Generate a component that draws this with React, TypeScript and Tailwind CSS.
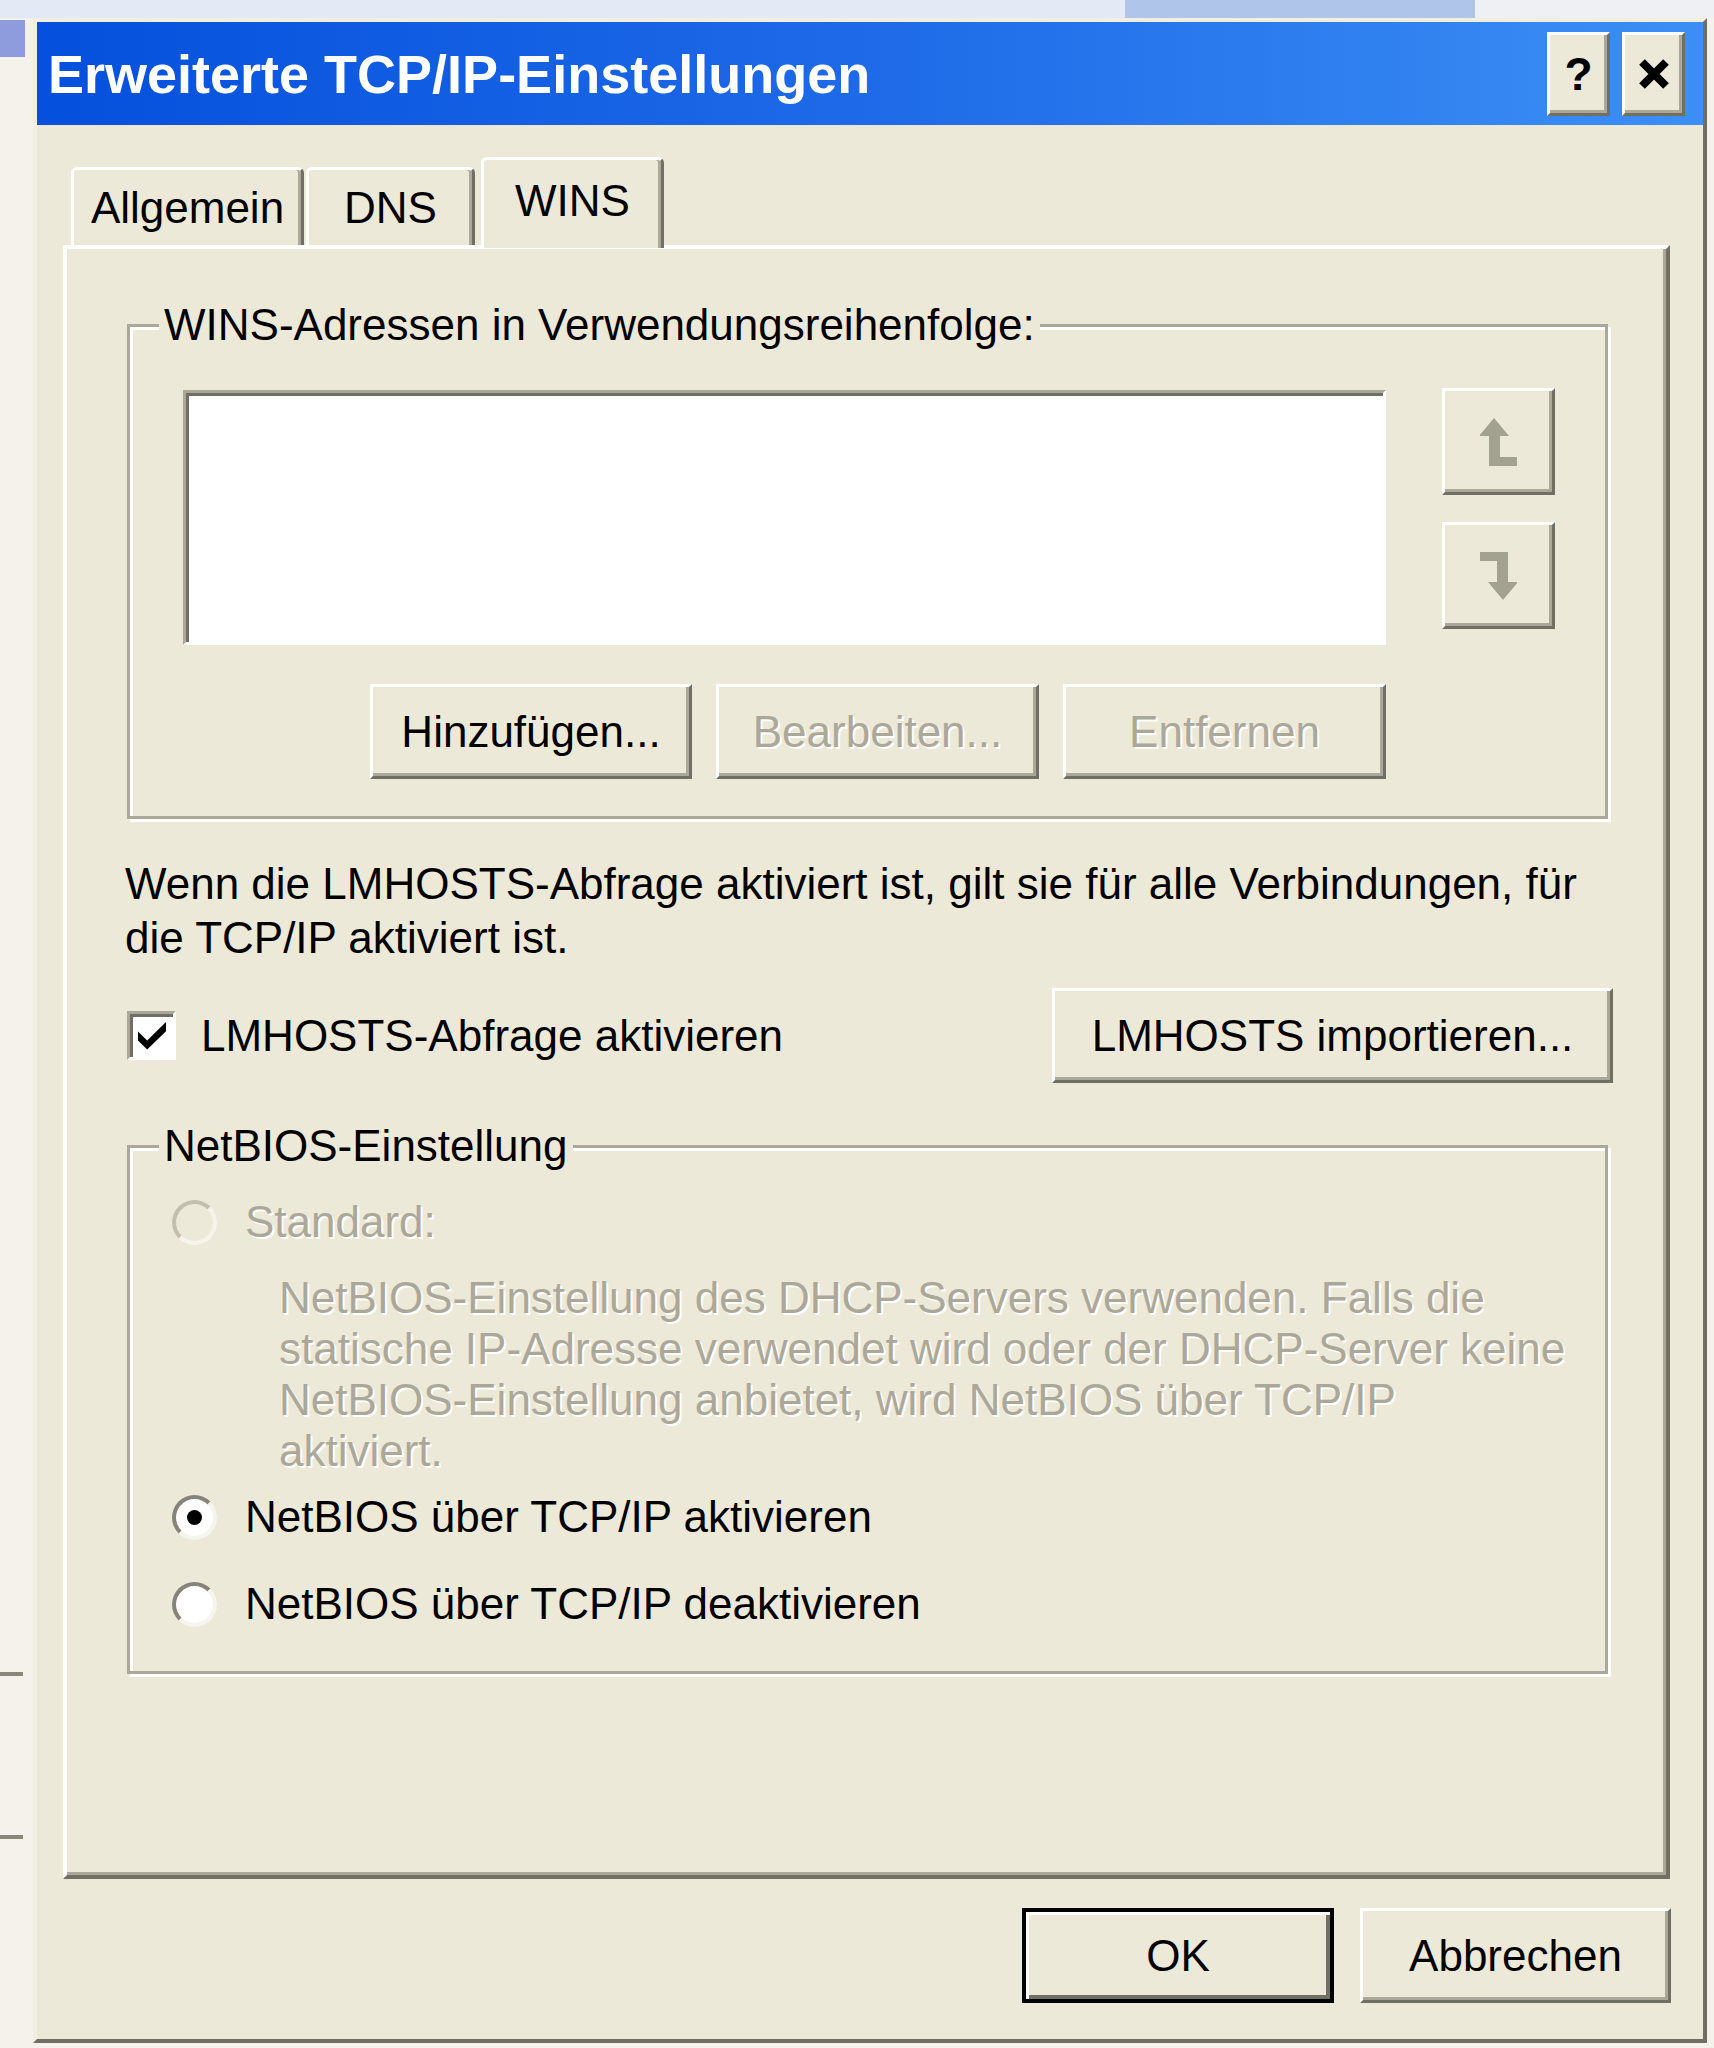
import React from "react";

const FACE = "bg-[#ECE9D8]";
const RAISED =
  "border-[3px] border-t-white border-l-white border-r-[#716F64] border-b-[#716F64] shadow-[inset_-3px_-3px_0_#ACA899]";
const DISABLED_TEXT = "text-[#ACA899] [text-shadow:2px_2px_0_#ffffff]";

function XpButton({
  label,
  disabled,
  isDefault,
  className = "",
}: {
  label: string;
  disabled?: boolean;
  isDefault?: boolean;
  className?: string;
}) {
  const frame = isDefault
    ? "border-[4px] border-black shadow-[inset_3px_3px_0_#ffffff,inset_-4px_-4px_0_#716F64]"
    : RAISED;
  return (
    <div
      className={`flex h-[95px] items-center justify-center ${FACE} ${frame} text-[44px] leading-none ${
        disabled ? DISABLED_TEXT : "text-black"
      } ${className}`}
    >
      {label}
    </div>
  );
}

function GroupBox({
  title,
  className = "",
  children,
}: {
  title: string;
  className?: string;
  children: React.ReactNode;
}) {
  return (
    <div
      className={`relative border-[3px] border-[#ACA899] shadow-[inset_3px_3px_0_#ffffff,3px_3px_0_#ffffff] ${className}`}
    >
      <span className="absolute -top-[29px] left-[29px] whitespace-nowrap bg-[#ECE9D8] px-[5px] text-[44px] leading-[54px] text-black">
        {title}
      </span>
      {children}
    </div>
  );
}

function MoveArrow({ down }: { down?: boolean }) {
  return (
    <svg
      width="37"
      height="48"
      viewBox="0 0 37 48"
      className={down ? "rotate-180" : ""}
    >
      <polygon
        points="14,0 29,18 20,18 20,39 37,39 37,48 9,48 9,18 -1,18"
        fill="#A3A18F"
      />
    </svg>
  );
}

function Radio({
  label,
  checked,
  disabled,
}: {
  label: string;
  checked?: boolean;
  disabled?: boolean;
}) {
  return (
    <div className="flex h-[54px] items-center">
      <span
        className={
          disabled
            ? "flex h-[45px] w-[45px] items-center justify-center rounded-full border-[4px] border-t-[#C3BFAF] border-l-[#C3BFAF] border-b-[#F6F4EC] border-r-[#F6F4EC] bg-[#ECE9D8]"
            : "flex h-[45px] w-[45px] items-center justify-center rounded-full border-[4px] border-t-[#85837A] border-l-[#85837A] border-b-[#F6F4EC] border-r-[#F6F4EC] bg-white"
        }
      >
        {checked && <span className="h-[15px] w-[15px] rounded-full bg-black" />}
      </span>
      <span
        className={`ml-[28px] whitespace-nowrap text-[44px] leading-[54px] ${
          disabled ? DISABLED_TEXT : "text-black"
        }`}
      >
        {label}
      </span>
    </div>
  );
}

function Tab({ label, width, active }: { label: string; width: string; active?: boolean }) {
  return (
    <div
      className={
        active
          ? `relative z-10 flex h-[91px] items-center justify-center rounded-t-[6px] border-l-[3px] border-t-[3px] border-r-[3px] border-l-white border-t-white border-r-[#716F64] pb-[6px] ${FACE} shadow-[inset_-3px_0_0_#ACA899] ${width}`
          : `mb-[3px] flex h-[78px] items-center justify-center rounded-t-[6px] border-l-[3px] border-t-[3px] border-r-[3px] border-l-white border-t-white border-r-[#716F64] ${FACE} shadow-[inset_-3px_0_0_#ACA899] ${width}`
      }
    >
      <span className="text-[44px] leading-none text-black">{label}</span>
    </div>
  );
}

export default function App() {
  return (
    <div className="relative h-[2048px] w-[1714px] overflow-hidden bg-[#F4F2EA] font-['Liberation_Sans',Arial,sans-serif]">
      {/* hintergrund oben */}
      <div className="flex h-[18px] w-full">
        <div className="h-full w-[1125px] bg-[#E3E9F5]" />
        <div className="h-full w-[350px] bg-[#AFC6EA]" />
        <div className="h-full flex-1 bg-[#EEF0F4]" />
      </div>

      <div className="flex">
        {/* linker rand */}
        <div className="flex w-[33px] flex-col">
          <div className="mt-[2px] h-[37px] w-[25px] bg-[#8E9CDD]" />
          <div className="mt-[1615px] h-[4px] w-[23px] bg-[#8A887C]" />
          <div className="mt-[159px] h-[4px] w-[23px] bg-[#8A887C]" />
        </div>

        {/* dialog */}
        <div className="flex h-[2025px] w-[1674px] flex-col border-[4px] border-t-[#F1EFE2] border-l-[#F1EFE2] border-r-[#716F64] border-b-[#716F64] bg-[#ECE9D8]">
          <div className="flex h-[103px] items-center justify-between bg-linear-to-r from-[#0550DC] via-[#1E6AE8] to-[#3C8FF5] pl-[11px] pr-[18px]">
            <span className="whitespace-nowrap text-[54px] font-bold leading-none text-white">
              Erweiterte TCP/IP-Einstellungen
            </span>
            <div className="flex gap-[12px]">
              <div className={`flex h-[84px] w-[63px] items-center justify-center ${FACE} ${RAISED}`}>
                <span className="text-[46px] font-bold leading-none text-black">?</span>
              </div>
              <div className={`flex h-[84px] w-[63px] items-center justify-center ${FACE} ${RAISED}`}>
                <svg width="32" height="32" viewBox="0 0 32 32">
                  <path d="M4 4 L28 28 M28 4 L4 28" stroke="#000" strokeWidth="8" />
                </svg>
              </div>
            </div>
          </div>

          {/* reiter */}
          <div className="mt-[32px] flex items-end pl-[34px]">
            <Tab label="Allgemein" width="w-[233px]" />
            <div className="w-[2px]" />
            <Tab label="DNS" width="w-[169px]" />
            <div className="w-[6px]" />
            <Tab label="WINS" width="w-[183px]" active />
          </div>

          <div className="ml-[26px] -mt-[3px] h-[1634px] w-[1607px] border-[4px] border-t-white border-l-white border-r-[#716F64] border-b-[#716F64] pl-[60px] pt-[75px] shadow-[inset_-3px_-3px_0_#ACA899]">
            <GroupBox title="WINS-Adressen in Verwendungsreihenfolge:" className="w-[1481px] pb-[37px] pl-[53px] pt-[63px]">
              <div className="flex items-start gap-[56px]">
                <div className="flex w-[1203px] flex-col">
                  <div className="h-[255px] w-[1203px] border-[3px] border-t-[#ACA899] border-l-[#ACA899] border-b-white border-r-white bg-white shadow-[inset_3px_3px_0_#716F64]" />
                  <div className="mt-[39px] flex justify-end gap-[24px]">
                    <XpButton label="Hinzufügen..." className="w-[322px]" />
                    <XpButton label="Bearbeiten..." disabled className="w-[323px]" />
                    <XpButton label="Entfernen" disabled className="w-[323px]" />
                  </div>
                </div>
                <div className="-mt-[2px] flex flex-col gap-[27px]">
                  <div className={`flex h-[107px] w-[113px] items-center justify-center ${FACE} ${RAISED}`}>
                    <MoveArrow />
                  </div>
                  <div className={`flex h-[107px] w-[113px] items-center justify-center ${FACE} ${RAISED}`}>
                    <MoveArrow down />
                  </div>
                </div>
              </div>
            </GroupBox>

            <p className="-ml-[2px] mt-[38px] whitespace-nowrap text-[44px] leading-[54px] text-black">
              Wenn die LMHOSTS-Abfrage aktiviert ist, gilt sie für alle Verbindungen, für
              <br />
              die TCP/IP aktiviert ist.
            </p>

            <div className="mt-[23px] flex h-[95px] w-[1486px] items-center justify-between">
              <div className="flex items-center">
                <span className="flex h-[49px] w-[49px] items-center justify-center border-[3px] border-t-[#ACA899] border-l-[#ACA899] border-b-white border-r-white bg-white shadow-[inset_3px_3px_0_#716F64]">
                  <svg width="28" height="28" viewBox="0 0 7 7">
                    <path d="M0 2.4 L2.3 4.6 L7 0 L7 2.3 L2.3 6.9 L0 4.6 Z" fill="#000" />
                  </svg>
                </span>
                <span className="ml-[25px] whitespace-nowrap text-[44px] leading-[54px] text-black">
                  LMHOSTS-Abfrage aktivieren
                </span>
              </div>
              <XpButton label="LMHOSTS importieren..." className="w-[561px]" />
            </div>

            <GroupBox title="NetBIOS-Einstellung" className="mt-[62px] w-[1481px] pb-[40px] pl-[42px] pt-[47px]">
              <Radio label="Standard:" disabled />
              <p className={`mt-[23px] whitespace-nowrap pl-[107px] text-[44px] leading-[51px] ${DISABLED_TEXT}`}>
                NetBIOS-Einstellung des DHCP-Servers verwenden. Falls die
                <br />
                statische IP-Adresse verwendet wird oder der DHCP-Server keine
                <br />
                NetBIOS-Einstellung anbietet, wird NetBIOS über TCP/IP
                <br />
                aktiviert.
              </p>
              <div className="mt-[14px]">
                <Radio label="NetBIOS über TCP/IP aktivieren" checked />
              </div>
              <div className="mt-[33px]">
                <Radio label="NetBIOS über TCP/IP deaktivieren" />
              </div>
            </GroupBox>
          </div>

          <div className="mt-[29px] flex justify-end gap-[26px] pr-[32px]">
            <XpButton label="OK" isDefault className="w-[312px]" />
            <XpButton label="Abbrechen" className="w-[311px]" />
          </div>
        </div>
      </div>
    </div>
  );
}
